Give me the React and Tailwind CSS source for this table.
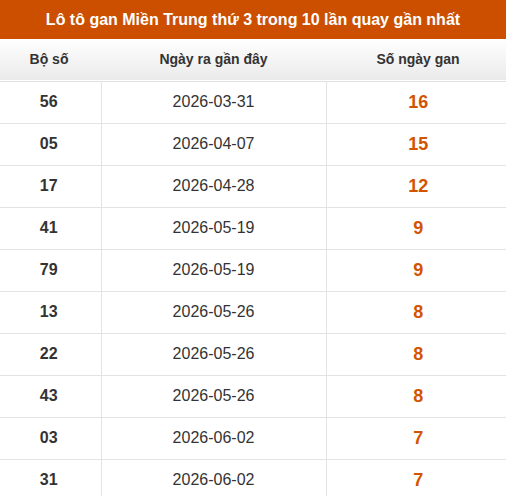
import React from 'react';

const rows = [
    ['56', '2026-03-31', '16'],
    ['05', '2026-04-07', '15'],
    ['17', '2026-04-28', '12'],
    ['41', '2026-05-19', '9'],
    ['79', '2026-05-19', '9'],
    ['13', '2026-05-26', '8'],
    ['22', '2026-05-26', '8'],
    ['43', '2026-05-26', '8'],
    ['03', '2026-06-02', '7'],
    ['31', '2026-06-02', '7'],
];

const App = () => {
    return (
        <div className="w-[506px] h-[496px] overflow-hidden bg-white font-['Liberation_Sans',Arial,sans-serif] text-[#333]">
            <div className="h-[39px] bg-[#cc4f00] text-white text-[16px] font-bold flex items-center justify-center">
                Lô tô gan Miền Trung thứ 3 trong 10 lần quay gần nhất
            </div>
            <table className="w-full border-collapse">
                <thead>
                    <tr className="h-[42px] bg-gradient-to-b from-white to-[#eaeaea] border-b border-[#e0e0e0] text-[14px] font-bold">
                        <th className="w-[101px] pr-[3px] font-bold">Bộ số</th>
                        <th className="w-[225px] font-bold">Ngày ra gần đây</th>
                        <th className="pl-[4px] font-bold">Số ngày gan</th>
                    </tr>
                </thead>
                <tbody>
                    {rows.map((r, i) => (
                        <tr key={i} className="h-[42px] border-b border-[#e3e3e3]">
                            <td className="pr-[3px] text-center text-[16px] font-bold border-r border-[#e3e3e3]">{r[0]}</td>
                            <td className="text-center text-[16px] border-r border-[#e3e3e3]">{r[1]}</td>
                            <td className="pl-[4px] text-center text-[18px] font-bold text-[#d35400]">{r[2]}</td>
                        </tr>
                    ))}
                </tbody>
            </table>
        </div>
    );
};

export default App;
